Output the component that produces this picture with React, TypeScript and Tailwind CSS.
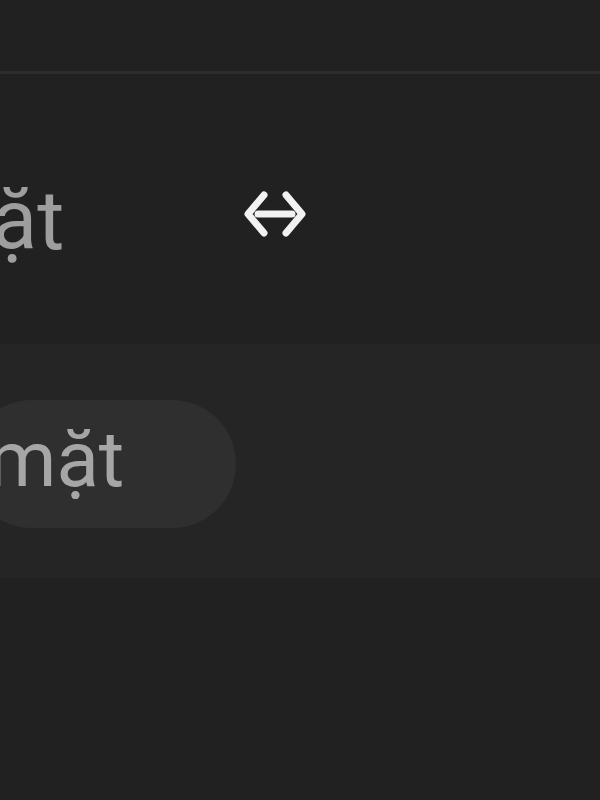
export default function App() {
  return (
    <div
      className="w-[600px] h-[800px] overflow-hidden bg-[#212121] flex flex-col"
      style={{ fontFamily: 'Roboto, "Noto Sans", sans-serif' }}
    >
      <div className="h-[71px] shrink-0" />
      <div className="h-[3px] shrink-0 bg-[#2d2d2d]" />

      <div className="h-[270px] shrink-0 flex items-start">
        <div className="w-[240px] shrink-0 overflow-hidden">
          <div className="ml-[-8px] mt-[97px] text-[83px] leading-[100px] text-[#9e9e9e] whitespace-nowrap">
            ặt
          </div>
        </div>
        <svg
          className="mt-[116px] ml-[4px]"
          width="64"
          height="48"
          viewBox="0 0 64 48"
          fill="none"
          stroke="#f2f2f2"
          strokeWidth="7"
          strokeLinecap="round"
          strokeLinejoin="round"
        >
          <path d="M20 5 L4 24 L20 43" />
          <path d="M42 5 L58 24 L42 43" />
          <path d="M14 24 L48 24" />
        </svg>
      </div>

      <div className="h-[234px] shrink-0 bg-[#252525] flex items-start">
        <div className="mt-[56px] ml-[-32px] h-[128px] rounded-full bg-[#2f2f2f] flex items-center pl-[20px] pr-[112px]">
          <span className="text-[78px] leading-none text-[#a6a6a6] whitespace-nowrap mt-[-8px]">
            mặt
          </span>
        </div>
      </div>

      <div className="flex-1" />
    </div>
  );
}
